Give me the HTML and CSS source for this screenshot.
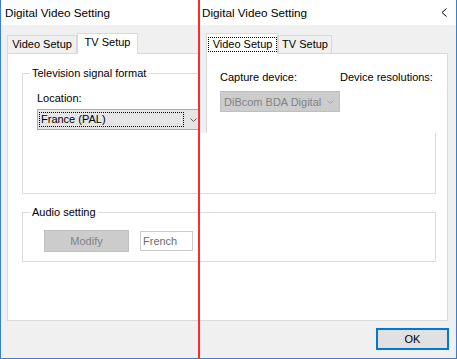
FILE: index.html
```html
<!DOCTYPE html>
<html>
<head>
<meta charset="utf-8">
<link rel="stylesheet" href="styles.css">
</head>
<body>
<div class="desk">
  <div class="dlg">
    <div class="titlebar"><span class="title">Digital Video Setting</span></div>
    <div class="dlg-body">
      <div class="tabs">
        <div class="tab inactive w-video">Video Setup</div>
        <div class="tab active w-tv">TV Setup</div>
      </div>
      <div class="panel">
        <div class="group g-tv">
          <div class="group-title">Television signal format</div>
          <div class="field-label">Location:</div>
          <div class="combo">
            <span class="combo-focus">France (PAL)</span>
            <svg class="chev" width="7" height="4" viewBox="0 0 7 4"><polyline points="0.5,0.5 3.5,3.5 6.5,0.5" fill="none" stroke="#606060" stroke-width="1"/></svg>
          </div>
        </div>
        <div class="group g-audio">
          <div class="group-title">Audio setting</div>
          <div class="audio-row">
            <button class="btn-disabled" disabled>Modify</button>
            <div class="textbox">French</div>
          </div>
        </div>
      </div>
      <div class="footer"><button class="ok">OK</button></div>
    </div>
  </div>

  <div class="overlay">
    <div class="titlebar right-title">
      <span class="title">Digital Video Setting</span>
      <svg class="close" width="6" height="9" viewBox="0 0 6 9"><polyline points="5.5,0.5 1,4.5 5.5,8.5" fill="none" stroke="#000" stroke-width="1"/></svg>
    </div>
    <div class="ov-body">
      <div class="tabs">
        <div class="tab active w-video2"><span class="tab-focus">Video Setup</span></div>
        <div class="tab inactive w-tv2">TV Setup</div>
      </div>
      <div class="panel ov-panel">
        <div class="cap-grid">
          <div class="cap-label">Capture device:</div>
          <div class="cap-label">Device resolutions:</div>
          <div class="combo combo-disabled">
            <span class="combo-text">DiBcom BDA Digital</span>
            <svg class="chev" width="7" height="4" viewBox="0 0 7 4"><polyline points="0.5,0.5 3.5,3.5 6.5,0.5" fill="none" stroke="#a6a6a6" stroke-width="1"/></svg>
          </div>
        </div>
      </div>
    </div>
  </div>

  <div class="divider"></div>
</div>
</body>
</html>
```

FILE: styles.css
```css
* { box-sizing: border-box; }
body {
  margin: 0;
  font-family: "Liberation Sans", Arial, sans-serif;
  font-size: 11px;
  color: #000;
}
.desk {
  position: relative;
  width: 457px;
  height: 359px;
  overflow: hidden;
}
.dlg {
  width: 457px;
  height: 359px;
  background: #f0f0f0;
  border: 1px solid #3c7fc8;
  border-top: 0;
  display: flex;
  flex-direction: column;
}
.titlebar {
  height: 25px;
  flex: none;
  background: #fff;
  display: flex;
  align-items: center;
  padding-left: 4px;
}
.title { font-size: 11.7px; }
.dlg-body {
  flex: 1;
  padding: 8px 7px 0 6px;
  display: flex;
  flex-direction: column;
}
.tabs {
  display: flex;
  align-items: flex-start;
  height: 21px;
  margin-bottom: -1px;
  flex: none;
}
.tab {
  border: 1px solid #d9d9d9;
  border-bottom: 0;
  line-height: 16px;
  text-align: center;
  background: #f0f0f0;
}
.tab.inactive { margin-top: 2px; height: 18px; }
.tab.active { height: 21px; background: #fff; position: relative; z-index: 1; }
.w-video { width: 70px; }
.w-tv { width: 61px; }
.w-video2 { width: 72px; }
.w-tv2 { width: 54px; }
.tab-focus {
  display: block;
  width: 69px;
  height: 15px;
  margin: 3px 0 0 1px;
  border: 1px dotted #000;
  line-height: 12px;
}
.panel {
  width: 441px;
  height: 268px;
  flex: none;
  background: #fff;
  border: 1px solid #d9d9d9;
  padding: 19px 0 0 14px;
}
.group {
  width: 414px;
  border: 1px solid #dcdcdc;
}
.g-tv { height: 121px; padding-left: 14px; }
.g-audio { height: 50px; margin-top: 18px; padding-left: 21px; }
.group-title {
  width: fit-content;
  margin: -9px 0 0 -7px;
  padding: 0 2px;
  background: #fff;
  line-height: 16px;
}
.g-audio .group-title { margin-left: -14px; }
.field-label {
  line-height: 16px;
  margin-top: 9px;
}
.combo {
  width: 166px;
  height: 21px;
  margin-top: 3px;
  background: #e5e5e5;
  border: 1px solid #adadad;
  display: flex;
  align-items: center;
}
.combo-focus {
  width: 145px;
  height: 15px;
  margin-left: 1px;
  border: 1px dotted #000;
  padding-left: 1px;
  line-height: 13px;
}
.chev { margin-left: 6px; flex: none; }
.audio-row {
  display: flex;
  align-items: flex-start;
  margin-top: 10px;
}
.btn-disabled {
  width: 85px;
  height: 22px;
  padding: 0;
  font: inherit;
  color: #838383;
  background: #cccccc;
  border: 1px solid #bfbfbf;
}
.textbox {
  width: 53px;
  height: 20px;
  margin: 1px 0 0 11px;
  border: 1px solid #cccccc;
  background: #fff;
  color: #6d6d6d;
  line-height: 18px;
  padding-left: 2px;
}
.footer {
  display: flex;
  justify-content: flex-end;
  padding-top: 7px;
}
.ok {
  width: 73px;
  height: 22px;
  padding: 0;
  font: inherit;
  color: #000;
  background: #e1e1e1;
  border: 2px solid #0078d7;
}

/* second dialog window lying over the first */
.overlay {
  position: absolute;
  left: 200px;
  top: 0;
  width: 257px;
  height: 133px;
  overflow: hidden;
  background: #f0f0f0;
  border-right: 1px solid #3c7fc8;
  display: flex;
  flex-direction: column;
}
.right-title { padding-left: 2px; }
.close { margin-left: auto; margin-right: 9px; }
.ov-body {
  flex: 1;
  padding: 8px 0 0 6px;
  display: flex;
  flex-direction: column;
}
.ov-panel {
  width: 242px;
  height: 200px;
  padding: 15px 0 0 13px;
}
.cap-grid {
  display: grid;
  grid-template-columns: 120px auto;
  row-gap: 6px;
}
.cap-label { line-height: 16px; }
.combo-disabled {
  width: 120px;
  margin-top: 0;
  background: #cccccc;
  border-color: #bfbfbf;
}
.combo-text {
  color: #838383;
  padding-left: 3px;
  width: 104px;
  white-space: nowrap;
}
.combo-disabled .chev { margin-left: 2px; }

.divider {
  position: absolute;
  left: 198px;
  top: 0;
  width: 2px;
  height: 359px;
  background: #ff2a2a;
}
```
